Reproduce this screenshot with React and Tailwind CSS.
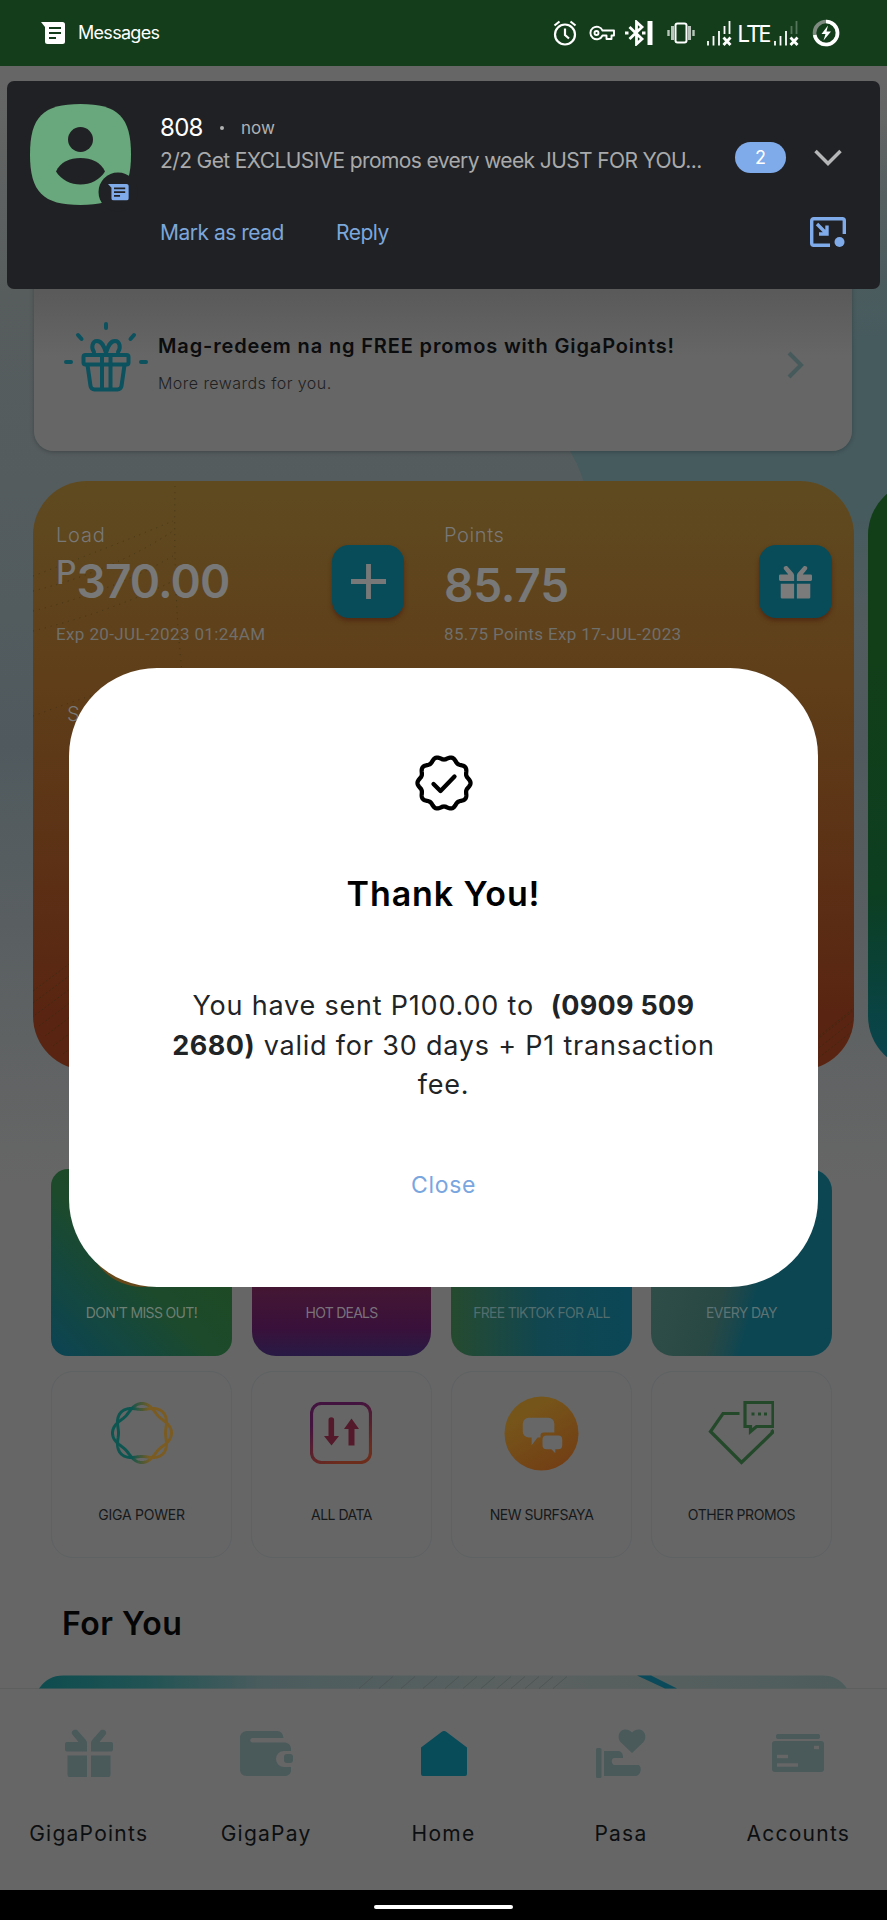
import clsx from "clsx";

// closed wavy outline: radius r, wobble a, n bumps
function wavyPath(cx, cy, r, a, n, phase = 0) {
  const pts = [];
  for (let i = 0; i < 240; i++) {
    const t = (i / 240) * Math.PI * 2;
    const rad = r + a * Math.cos(n * t + phase);
    pts.push(`${(cx + rad * Math.cos(t)).toFixed(2)} ${(cy + rad * Math.sin(t)).toFixed(2)}`);
  }
  return `M${pts.join("L")}Z`;
}

function MessagesIcon({ className, lines }) {
  return (
    <svg viewBox="0 0 24 22" className={className}>
      <path d="M0 0h21.500a2.500 2.500 0 0 1 2.500 2.500v17a2.500 2.500 0 0 1-2.500 2.500h-15a2.500 2.500 0 0 1-2.500-2.500V5z" fill="currentColor" />
      <path d="M8 6h12M8 11h12M8 16h7" stroke={lines} strokeWidth="2.200" />
    </svg>
  );
}

function SignalIcon({ dim }) {
  return (
    <svg viewBox="0 0 25 25" className="h-[25px] w-[25px]" stroke="#fff" strokeWidth="1.800">
      <path d="M1 24.500V20M6.500 24.500V15M12 24.500V10" />
      <path d="M17.500 13V5M22.500 13V0" stroke={dim ? "#55755b" : "#fff"} />
      <path d="M16.500 16.500l7 7.500M23.500 16.500l-7 7.500" strokeWidth="2.800" />
    </svg>
  );
}

function StatusBar() {
  return (
    <div className="flex h-[66px] shrink-0 items-center bg-[#133d1b] pl-[41px] text-white">
      <MessagesIcon className="h-[22px] w-[24px]" lines="#133d1b" />
      <span className="ml-[13px] w-[82px] text-[18px] leading-6 tracking-[-0.700px]">Messages</span>
      <svg viewBox="0 0 24 26" className="ml-[393px] h-[26px] w-[24px]" fill="none" stroke="#fff" strokeWidth="2.200">
        <circle cx="12" cy="14.500" r="10" />
        <path d="M12 8.500v6.500l4 3.500M1.500 5.500L6.500 1.500M22.500 5.500l-5-4" />
      </svg>
      <svg viewBox="0 0 26 16" className="ml-[12px] h-[16px] w-[26px]" fill="none" stroke="#fff" strokeWidth="1.900" strokeLinejoin="round">
        <path d="M13.500 5.500H25v5h-2.500V14h-5v-3.500h-4a6.300 6.300 0 1 1 0-5z" />
        <circle cx="7.500" cy="8" r="2" />
      </svg>
      <svg viewBox="0 0 28 26" className="ml-[10px] h-[26px] w-[28px]" fill="none" stroke="#fff" strokeWidth="2.800">
        <path d="M4.500 7l12.500 12-5.500 5V2l5.500 5-12.500 12" />
        <path d="M25 1v24" strokeWidth="5" />
        <path d="M0 13h3.500M17 13h3.500" strokeWidth="3" />
      </svg>
      <svg viewBox="0 0 28 22" className="ml-[14px] h-[22px] w-[28px]" fill="none" stroke="#fff" strokeWidth="2">
        <rect x="8.500" y="1.500" width="11" height="19" rx="2" />
        <path d="M5.500 4v14M22.500 4v14" strokeWidth="3" stroke="#b9c5ba" />
        <path d="M1.500 8v6M26.500 8v6" strokeWidth="2.400" stroke="#b9c5ba" />
      </svg>
      <span className="ml-[12px]"><SignalIcon /></span>
      <span className="ml-[5px] w-[35px] font-['Noto_Sans',sans-serif] text-[24px] leading-8 tracking-[-2.200px]">LTE</span>
      <span className="ml-[2px]"><SignalIcon dim /></span>
      <svg viewBox="0 0 28 28" className="ml-[13px] h-[28px] w-[28px]">
        <circle cx="14" cy="14" r="11.500" fill="none" stroke="#7e8a7f" strokeWidth="3.600" />
        <path d="M14 2.500A11.500 11.500 0 1 1 2.700 16" fill="none" stroke="#fff" strokeWidth="3.600" />
        <path d="M16 6.500L9.500 15h4l-2 6.500 7.500-9h-4.500z" fill="#fff" />
      </svg>
    </div>
  );
}

function Notification() {
  return (
    <div className="absolute top-[81px] left-[7px] flex h-[208px] w-[873px] rounded-[7px] bg-[#202124] pl-[23px]">
      <svg viewBox="0 0 101 101" className="mt-[23px] h-[101px] w-[101px] shrink-0 overflow-visible">
        <path d="M50.500 0C88 0 101 13 101 50.500S88 101 50.500 101 0 88 0 50.500 13 0 50.500 0z" fill="#68a87c" />
        <circle cx="50.500" cy="35.500" r="12.500" fill="#202124" />
        <path d="M26 67.500C30 58 40 54 50.500 54S71 58 75 67.500C70 76 60 80.500 50.500 80.500S31 76 26 67.500z" fill="#202124" />
        <circle cx="88" cy="88" r="19.500" fill="#202124" />
        <g transform="translate(78 80) scale(.86 .74)">
          <path d="M0 0h21.500a2.500 2.500 0 0 1 2.500 2.500v17a2.500 2.500 0 0 1-2.500 2.500h-15a2.500 2.500 0 0 1-2.500-2.500V5z" fill="#80abea" />
          <path d="M7 6h13M7 11h13M7 16h7" stroke="#202124" strokeWidth="2.500" />
        </g>
      </svg>
      <div className="mt-[31px] ml-[29px] w-[560px] shrink-0 whitespace-nowrap">
        <div className="flex items-center text-[#b0b1b2]">
          <span className="w-[60px] text-[24px] leading-8 tracking-[-0.700px] text-white">808</span>
          <span className="h-[4px] w-[4px] rounded-full bg-[#b0b1b2]" />
          <span className="ml-[17px] text-[17px] leading-8">now</span>
        </div>
        <p className="mt-px text-[21px] leading-[32px] tracking-[-0.620px] text-[#a9aaab]">
          2/2 Get EXCLUSIVE promos every week JUST FOR YOU...
        </p>
        <div className="mt-[40px] flex text-[21px] leading-8 tracking-[-0.500px] text-[#7ba7dc]">
          <button className="w-[176px] text-left">Mark as read</button>
          <button>Reply</button>
        </div>
      </div>
      <div className="mt-[61px] ml-[15px] flex h-[31px] w-[51px] items-center justify-center rounded-full bg-[#80abea] text-[18px] text-white">
        2
      </div>
      <div className="ml-[24px] flex w-[36px] flex-col items-center">
        <svg viewBox="0 0 28 18" className="mt-[68px] h-[18px] w-[28px]" fill="none" stroke="#b5b6b7" strokeWidth="3.500">
          <path d="M1.500 2L14 14.500 26.500 2" />
        </svg>
        <svg viewBox="0 0 36 30" className="mt-[50px] h-[30px] w-[36px]" fill="none" stroke="#80abea" strokeWidth="3.400">
          <path d="M20 28.300H3.700a2 2 0 0 1-2-2V3.700a2 2 0 0 1 2-2h28.600a2 2 0 0 1 2 2V17" />
          <path d="M7 7l9.500 9.500M17 8.500V17H9" />
          <circle cx="29.500" cy="25" r="5" fill="#80abea" stroke="none" />
        </svg>
      </div>
    </div>
  );
}

function GiftIcon({ className }) {
  return (
    <svg viewBox="0 0 48 48" className={className} fill="currentColor">
      <path d="M22 22.500H2a2 2 0 0 1-2-2V15a2 2 0 0 1 2-2h11.500L7 5C6 2 9 0 12 1l8 9c1 1 2 3 2 4z" />
      <path d="M26 22.500h20a2 2 0 0 0 2-2V15a2 2 0 0 0-2-2H34.500L41 5c1-3-2-5-5-4l-8 9c-1 1-2 3-2 4z" />
      <path d="M2.500 26.500H22V48H4.500a2 2 0 0 1-2-2zM26 26.500h19.500V46a2 2 0 0 1-2 2H26z" />
    </svg>
  );
}

function RewardsCard() {
  return (
    <div className="mt-[174px] ml-[34px] flex h-[211px] w-[818px] shrink-0 rounded-[20px] bg-linear-to-b from-[#5a5a5a] from-25% to-[#666666] to-55% shadow-[0_1px_4px_rgba(0,0,0,0.25)]">
      <svg viewBox="0 0 84 70" className="mt-[82px] ml-[30px] h-[70px] w-[84px]" fill="none" stroke="#0c515e" strokeWidth="4" strokeLinecap="round" strokeLinejoin="round">
        <path d="M42 2v4M14 13l3.500 4M70 13l-3.500 4M2 40h5M77 40h5" />
        <rect x="19.500" y="33" width="45" height="9.500" rx="2" />
        <path d="M23.500 43l3 21a4 4 0 0 0 4 3.500h23a4 4 0 0 0 4-3.500l3-21M38 33v34M46.500 33v34" />
        <path d="M42 31c-2-7-4-12-9-12s-6 7-3 11M42 31c2-7 4-12 9-12s6 7 3 11" />
      </svg>
      <div className="mt-[90px] ml-[10px] w-[600px]">
        <h2 className="text-[20px] leading-[32px] font-semibold tracking-[0.850px] whitespace-nowrap text-[#0b0c0e]">
          Mag-redeem na ng FREE promos with GigaPoints!
        </h2>
        <p className="mt-[5px] text-[16px] leading-[32px] font-light tracking-[0.450px] text-[#1e2022]">More rewards for you.</p>
      </div>
      <svg viewBox="0 0 20 28" className="mt-[111px] ml-[28px] h-[28px] w-[20px]" fill="none" stroke="#465a5c" strokeWidth="4">
        <path d="M3 2l12 12L3 26" />
      </svg>
    </div>
  );
}

function BalanceCards() {
  return (
    <div className="mt-[30px] flex h-[589px] shrink-0 gap-[14px] overflow-hidden pl-[33px]">
      <div className="relative w-[821px] shrink-0 overflow-hidden rounded-[54px] bg-linear-to-b from-[#5f4a20] via-[#5f3e19] via-35% to-[#592512] to-90% text-[#787878]">
        {/* faint hatch texture in the corners */}
        <svg viewBox="0 0 821 589" className="absolute inset-0" fill="none" stroke="#2b2a10" strokeOpacity=".45">
          <path d="M142 5q-2 110 8 195M0 110q80-20 140-60M0 130q80-20 140-55M0 150q80-20 140-50M0 95q80-30 140-55M0 235q80-30 150-45" strokeDasharray="1 5" />
          <path d="M0 510l40-30M0 522l60-45M2 534l70-52M6 545l80-60M12 555l90-68M20 565l90-68M30 573l90-68" strokeDasharray="2 2" />
          <path d="M770 589l51-40M758 589l63-50M746 589l75-60M780 560l41-33" strokeDasharray="2 2" />
        </svg>
        <div className="relative flex">
          <div className="mt-[42px] ml-[23px] w-[276px]">
            <div className="text-[20px] leading-[24px] font-light tracking-[0.800px]">Load</div>
            <div className="flex h-[65px]">
              <span className="mt-[13px] text-[32px] leading-[26px] font-medium">P</span>
              <span className="mt-[11px] text-[46px] leading-[46px] font-semibold tracking-[-0.900px]">370.00</span>
            </div>
            <div className="mt-[10px] font-[Roboto,sans-serif] text-[17px] leading-[24px] tracking-[0.380px] whitespace-nowrap text-[#6f6f6c]">
              Exp 20-JUL-2023 01:24AM
            </div>
          </div>
          <button className="mt-[64px] flex h-[73px] w-[72px] items-center justify-center rounded-[17px] bg-[#084c5a] shadow-[0_3px_4px_rgba(70,20,10,0.5)]">
            <span className="text-[#787878]">
              <svg viewBox="0 0 36 36" className="h-[35px] w-[35px]" stroke="currentColor" strokeWidth="5">
                <path d="M18 0v36M0 18h36" />
              </svg>
            </span>
          </button>
          <div className="mt-[42px] ml-[40px] w-[315px]">
            <div className="text-[20px] leading-[24px] font-light tracking-[0.600px]">Points</div>
            <div className="h-[65px] pt-[15px] text-[46px] leading-[46px] font-semibold tracking-[-0.200px]">85.75</div>
            <div className="mt-[10px] font-[Roboto,sans-serif] text-[17px] leading-[24px] tracking-[0.360px] whitespace-nowrap text-[#6f6f6c]">
              85.75 Points Exp 17-JUL-2023
            </div>
          </div>
          <button className="mt-[64px] flex h-[73px] w-[73px] items-center justify-center rounded-[17px] bg-[#084c5a] shadow-[0_3px_4px_rgba(70,20,10,0.5)]">
            <GiftIcon className="h-[34px] w-[33px] text-[#7b7b7b]" />
          </button>
        </div>
        <div className="mt-[50px] ml-[34px] text-[20px] leading-[36px] font-light">S</div>
      </div>
      <div className="w-[821px] shrink-0 rounded-[54px] bg-linear-to-b from-[#123f18] from-30% via-[#0c3e20] via-70% to-[#0a4552]" />
    </div>
  );
}

function TwistRing() {
  return (
    <svg viewBox="0 0 64 64" className="h-[64px] w-[64px]" fill="none" strokeWidth="3">
      <defs>
        <linearGradient id="ring" x1="0" x2="1">
          <stop offset=".3" stopColor="#0d5550" />
          <stop offset=".65" stopColor="#7a5c22" />
        </linearGradient>
      </defs>
      <g stroke="url(#ring)">
        <path d={wavyPath(32, 32, 26.500, 3, 4)} />
        <path d={wavyPath(32, 32, 26.500, -3, 4)} />
      </g>
    </svg>
  );
}

function DataIcon() {
  return (
    <svg viewBox="0 0 62 62" className="mr-[2px] h-[62px] w-[62px]">
      <defs>
        <linearGradient id="data" x1="0" y1="0" x2=".5" y2="1">
          <stop offset=".3" stopColor="#431340" />
          <stop offset="1" stopColor="#6d2d1d" />
        </linearGradient>
      </defs>
      <rect x="1.500" y="1.500" width="59" height="59" rx="10" fill="none" stroke="url(#data)" strokeWidth="3.200" />
      <path d="M18.500 18a2.800 2.800 0 0 1 5.600 0v16H29l-7.500 9.500L14 34h4.500z" fill="#541a2b" />
      <path d="M38.500 43.500V27H34l7.500-10.500L49 27h-4.500v16.500z" fill="#541a2b" />
    </svg>
  );
}

function ChatsIcon() {
  return (
    <svg viewBox="0 0 76 76" className="h-[75px] w-[75px]">
      <defs>
        <linearGradient id="chats" x1=".2" y1="0" x2=".8" y2="1">
          <stop offset=".2" stopColor="#76551a" />
          <stop offset="1" stopColor="#723d14" />
        </linearGradient>
      </defs>
      <circle cx="38" cy="38" r="37.500" fill="url(#chats)" />
      <path d="M25 22h20a6 6 0 0 1 6 6v9H40a3 3 0 0 0-3 3v2h-3l-6 8v-8h-3a6 6 0 0 1-6-6v-8a6 6 0 0 1 6-6z" fill="#676767" />
      <path d="M43 40h12a4 4 0 0 1 4 4v6a4 4 0 0 1-4 4h-3v4l-4-4h-5a4 4 0 0 1-4-4v-6a4 4 0 0 1 4-4z" fill="#676767" />
    </svg>
  );
}

function PromoIcon() {
  return (
    <svg viewBox="0 0 66 66" className="mr-[2px] mb-[2px] h-[66px] w-[66px]" fill="none" stroke="#23492a" strokeWidth="3.200">
      <path d="M31.500 14.500H15L2.500 32.500l31 31L65 33l-1.500-2" />
      <path d="M37 3.500h28v24H48.500l-6 5v-5H37z" />
      <path d="M43.500 15h3M50 15h3M56 15h3" />
    </svg>
  );
}

const HOT_TILES = [
  { label: "DON'T MISS OUT!", bg: "bg-linear-to-tr from-[#0b4354] via-[#1c4a2b] via-45% to-[#20491c] rounded-[17px]", text: "tracking-[-0.650px]" },
  { label: "HOT DEALS", bg: "bg-linear-to-b from-[#5a1f20] from-20% via-[#39103a] via-85% to-[#271a45] rounded-[24px] w-[179px] h-[186px]", text: "tracking-[-0.750px] text-[#7a727a]" },
  { label: "FREE TIKTOK FOR ALL", bg: "bg-linear-to-r from-[#254a2e] via-[#104650] via-50% to-[#0b4757] rounded-[22px]", text: "tracking-[-0.730px] text-[#526d6e]" },
  { label: "EVERY DAY", bg: "bg-linear-105 from-[#33504a] via-[#284844] via-45% to-[#0b4652] to-60% rounded-[22px]", text: "tracking-[-0.600px] text-[#5e7374]" },
];

const PROMO_TILES = [
  { label: "GIGA POWER", Icon: TwistRing, text: "tracking-[-0.250px]" },
  { label: "ALL DATA", Icon: DataIcon, text: "tracking-[-0.500px]" },
  { label: "NEW SURFSAYA", Icon: ChatsIcon, text: "tracking-[-0.450px]" },
  { label: "OTHER PROMOS", Icon: PromoIcon, text: "tracking-[-0.400px]" },
];

function PromoGrid() {
  return (
    <div className="mt-[99px] ml-[51px] grid w-[781px] shrink-0 grid-cols-4 gap-x-[19px] gap-y-[15px]">
      {HOT_TILES.map(({ label, bg, text }, i) => (
        <div key={label} className={clsx("relative flex h-[187px] items-end justify-center overflow-hidden", i === 1 && "ml-[1px]", bg)}>
          {i === 0 && <div className="absolute top-[7px] left-[36px] h-[111px] w-[111px] rounded-full bg-[#67481a]" />}
          <span className={clsx("mb-[33px] text-[14px] leading-[20px] whitespace-nowrap", i === 0 && "text-[#6e7f73]", text)}>{label}</span>
        </div>
      ))}
      {PROMO_TILES.map(({ label, Icon, text }) => (
        <div key={label} className="flex h-[187px] flex-col items-center rounded-[22px] border border-[#5e6263]">
          <div className="flex h-[122px] items-center justify-center">
            <Icon />
          </div>
          <span className={clsx("mt-[9px] text-[14px] leading-[24px] whitespace-nowrap text-[#16191b]", text)}>{label}</span>
        </div>
      ))}
    </div>
  );
}

function WalletIcon() {
  return (
    <svg viewBox="0 0 53 45" className="h-[45px] w-[53px]" fill="currentColor">
      <path d="M7 0h30c4 0 6 3 6.500 7H12a2.300 2.300 0 0 0 0 4.500h32c4 0 7 2.500 7 6.500v2h-7a8 8 0 0 0 0 16h7v3c0 4-3 6-7 6H7c-5 0-7-3-7-7V7c0-4 3-7 7-7z" />
      <rect x="44" y="23" width="9" height="9" rx="3" />
    </svg>
  );
}

function HomeIcon() {
  return (
    <svg viewBox="0 0 46 45" className="h-[45px] w-[46px] text-[#084b59]" fill="currentColor">
      <path d="M20.500 1a4 4 0 0 1 5 0L46 16.500V43a2 2 0 0 1-2 2H2a2 2 0 0 1-2-2V16.500z" />
    </svg>
  );
}

function PasaIcon() {
  return (
    <svg viewBox="0 0 50 49" className="h-[49px] w-[50px]" fill="currentColor">
      <path d="M36 24L24.500 13C21 9 22.500 1 29 .5c3 0 5 1 7 3 2-2 4-3 7-3 6.500.5 8 8.500 4.500 12.500z" />
      <rect x="0" y="19" width="5.500" height="30" rx="1.500" />
      <path d="M8 22h14c3 0 5 2 5 7H18c-3 0-3 6 0 7h24c4 0 4 11-3 11H8z" />
    </svg>
  );
}

function CardIcon() {
  return (
    <svg viewBox="0 0 52 38" className="h-[38px] w-[52px]" fill="currentColor">
      <rect x="4" y="0" width="44" height="5" rx="2" />
      <rect x="0" y="7" width="52" height="31" rx="3" />
      <path d="M5 22.500h11M5 31h21M42 13.500h5" stroke="#666666" strokeWidth="3.500" />
    </svg>
  );
}

const NAV = [
  { label: "GigaPoints", icon: <GiftIcon className="h-[48px] w-[48px]" /> },
  { label: "GigaPay", icon: <WalletIcon /> },
  { label: "Home", icon: <HomeIcon /> },
  { label: "Pasa", icon: <PasaIcon /> },
  { label: "Accounts", icon: <CardIcon /> },
];

function BottomNav() {
  return (
    <nav className="flex h-[202px] shrink-0 border-t border-[#5d5f5f] bg-[#666666]">
      {NAV.map(({ label, icon }) => (
        <div key={label} className="flex flex-1 flex-col items-center">
          <div className="mt-[34px] flex h-[60px] items-center text-[#4a595a]">{icon}</div>
          <span className="mt-[36px] text-[21px] leading-[30px] tracking-[1.250px] text-[#0c0f11]">{label}</span>
        </div>
      ))}
    </nav>
  );
}

function ThankYouModal() {
  return (
    <div className="absolute top-[668px] left-[69px] flex h-[619px] w-[749px] flex-col items-center rounded-[88px] bg-white text-center">
      <svg viewBox="0 0 60 60" className="mt-[85px] h-[60px] w-[60px]" fill="none" stroke="#000" strokeWidth="4.300" strokeLinejoin="round">
        <path d={wavyPath(30, 30, 25, 1.500, 10)} />
        <path d="M19.500 31l7 7L40.500 23.500" strokeLinecap="round" />
      </svg>
      <h1 className="mt-[60px] text-[34px] leading-[42px] font-semibold tracking-[0.900px] text-black">Thank You!</h1>
      <p className="mt-[71px] text-[27px] leading-[39.500px] tracking-[0.800px] whitespace-nowrap text-[#1f2426]">
        You have sent P100.00 to &nbsp;<b className="font-bold tracking-[0.300px]">(0909 509</b>
        <br />
        <b className="font-bold tracking-[0.500px]">2680)</b> valid for 30 days + P1 transaction
        <br />
        fee.
      </p>
      <button className="mt-[62px] text-[23px] leading-[36px] tracking-[0.700px] text-[#79a6df]">Close</button>
    </div>
  );
}

export default function App() {
  return (
    <div className="relative flex h-[1920px] w-[887px] flex-col overflow-hidden bg-[#666666] font-[Inter,sans-serif]">
      <StatusBar />
      <div className="relative flex h-[1622px] shrink-0 flex-col bg-[linear-gradient(#666666_1%,#575d5d_14%,#545c5e_26%,#505a5e_42%,#5f6263_60%,#666666_69%)]">
        {/* soft teal wedge behind the cards */}
        <svg viewBox="0 0 887 560" className="absolute top-0 left-0 h-[560px] w-[887px]">
          <defs>
            <linearGradient id="wedge" x1="0" y1="0" x2="0" y2="1">
              <stop offset=".1" stopColor="#465b5e" stopOpacity="0" />
              <stop offset=".5" stopColor="#465b5e" />
              <stop offset=".8" stopColor="#465b5e" />
              <stop offset="1" stopColor="#465b5e" stopOpacity="0" />
            </linearGradient>
          </defs>
          <path d="M520 0H887V560H640Q620 460 583 414 578 398 568 382 550 340 520 300z" fill="url(#wedge)" />
        </svg>
        <div className="relative flex flex-1 flex-col">
          <RewardsCard />
          <BalanceCards />
          <PromoGrid />
          <h2 className="mt-[46px] ml-[62px] text-[32px] leading-[40px] font-semibold tracking-[0.500px] text-[#050505]">For You</h2>
          <div className="mt-[31px] ml-[39px] h-[14px] w-[808px] overflow-hidden">
            <svg viewBox="0 0 808 13" className="h-[14px] w-[808px]">
              <defs>
                <linearGradient id="banner" x1="0" x2="1">
                  <stop offset="0" stopColor="#0e4c4f" />
                  <stop offset=".13" stopColor="#205354" />
                  <stop offset=".28" stopColor="#4b5c5e" />
                  <stop offset=".6" stopColor="#5b6160" />
                  <stop offset="1" stopColor="#4d5d5c" />
                </linearGradient>
              </defs>
              <path d="M0 13Q9 0 24 0H784Q799 0 808 13z" fill="url(#banner)" />
              <path d="M320 13l14-12M340 13l14-12M362 13l14-12M384 13l14-12M406 13l14-12M424 13l14-12M442 13l14-12M458 13l14-12M472 13l14-12M486 13l14-12M500 13l14-12M514 13l14-12" stroke="#4e5555" />
              <path d="M598 0h14l26 13h-12z" fill="#0b4a5a" />
            </svg>
          </div>
        </div>
      </div>
      <BottomNav />
      <div className="flex h-[30px] shrink-0 items-center justify-center bg-black">
        <div className="mt-[3px] h-[4px] w-[139px] rounded-full bg-white" />
      </div>
      <Notification />
      <ThankYouModal />
    </div>
  );
}
